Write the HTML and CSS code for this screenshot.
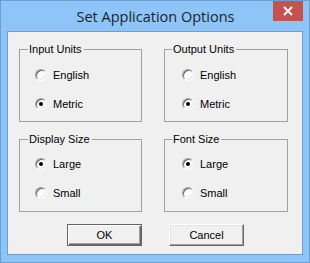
FILE: index.html
```html
<!DOCTYPE html>
<html>
<head>
<meta charset="utf-8">
<link rel="stylesheet" href="styles.css">
</head>
<body>
<div class="window">
  <div class="titlebar">
    <span class="title">Set Application Options</span>
    <span class="close"><svg width="10" height="10" viewBox="0 0 10 10"><path d="M1 1L9 9M9 1L1 9" stroke="#fff" stroke-width="2"/></svg></span>
  </div>
  <div class="client">
    <div class="groups">
      <div class="group g1">
        <span class="legend">Input Units</span>
        <div class="opt"><span class="radio"></span><span>English</span></div>
        <div class="opt"><span class="radio on"></span><span>Metric</span></div>
      </div>
      <div class="group g1 right">
        <span class="legend">Output Units</span>
        <div class="opt"><span class="radio"></span><span>English</span></div>
        <div class="opt"><span class="radio on"></span><span>Metric</span></div>
      </div>
      <div class="group g2">
        <span class="legend">Display Size</span>
        <div class="opt"><span class="radio on"></span><span>Large</span></div>
        <div class="opt"><span class="radio"></span><span>Small</span></div>
      </div>
      <div class="group g2 right">
        <span class="legend">Font Size</span>
        <div class="opt"><span class="radio on"></span><span>Large</span></div>
        <div class="opt"><span class="radio"></span><span>Small</span></div>
      </div>
    </div>
    <div class="buttons">
      <div class="btn default">OK</div>
      <div class="btn">Cancel</div>
    </div>
  </div>
</div>
</body>
</html>
```

FILE: styles.css
```css
html, body { margin: 0; padding: 0; background: #8cc4f6; }
.window {
  width: 310px; height: 263px; box-sizing: border-box;
  border: 1px solid #6a9fd6; background: #8dc5f8;
  padding: 0 6px 7px 6px;
  display: flex; flex-direction: column;
}
.titlebar {
  height: 30px; position: relative;
  display: flex; align-items: center; justify-content: center;
}
.title {
  font-family: "Open Sans", sans-serif; font-size: 14.5px; color: #1f1f1f;
  margin-top: 1px; margin-left: 1px;
}
.close {
  position: absolute; right: 0; top: 0; width: 30px; height: 20px;
  background: #c75050; display: flex; align-items: center; justify-content: center;
}
.client {
  flex: 1; border: 1px solid #6c9fd2; background: #f0f0f0;
  padding: 17px 0 0 11px;
  font-family: "Liberation Sans", Arial, sans-serif; font-size: 11px; color: #000;
}
.groups {
  display: grid; grid-template-columns: 123px 124px; column-gap: 22px; row-gap: 17px;
}
.group {
  position: relative; height: 73px; box-sizing: border-box;
  border: 1px solid #a0a0a0; padding-left: 15px;
  display: flex; flex-direction: column;
}
.g1 { padding-top: 18px; row-gap: 16px; }
.g2 { padding-top: 17px; row-gap: 16px; }
.right { padding-left: 17px; }
.legend {
  position: absolute; top: -7px; left: 8px; padding: 0 2px 0 1px;
  background: #f0f0f0; line-height: 13px;
}
.right .legend { left: 7px; }
.opt { display: flex; align-items: center; height: 13px; gap: 6px; }
.radio {
  width: 12px; height: 12px; box-sizing: border-box; border-radius: 50%;
  border: 1px solid; border-color: #a0a0a0 #ffffff #ffffff #a0a0a0;
  background: #fff; box-shadow: inset 1px 1px #696969, inset -1px -1px #e3e3e3;
  position: relative; flex: none;
}
.radio.on::after {
  content: ""; position: absolute; left: 3px; top: 3px; width: 4px; height: 4px;
  border-radius: 50%; background: #000;
}
.buttons {
  display: flex; gap: 27px; margin-top: 12px; padding-left: 48px;
}
.btn {
  width: 75px; height: 22px; box-sizing: border-box;
  display: flex; align-items: center; justify-content: center;
  border: 1px solid; border-color: #ffffff #696969 #696969 #ffffff;
  box-shadow: inset -1px -1px #a0a0a0, inset 1px 1px #e3e3e3;
  background: #f0f0f0;
}
.btn.default {
  border-color: #646464;
  box-shadow: inset 1px 1px #fff, inset -1px -1px #696969, inset -2px -2px #a0a0a0;
}
```
